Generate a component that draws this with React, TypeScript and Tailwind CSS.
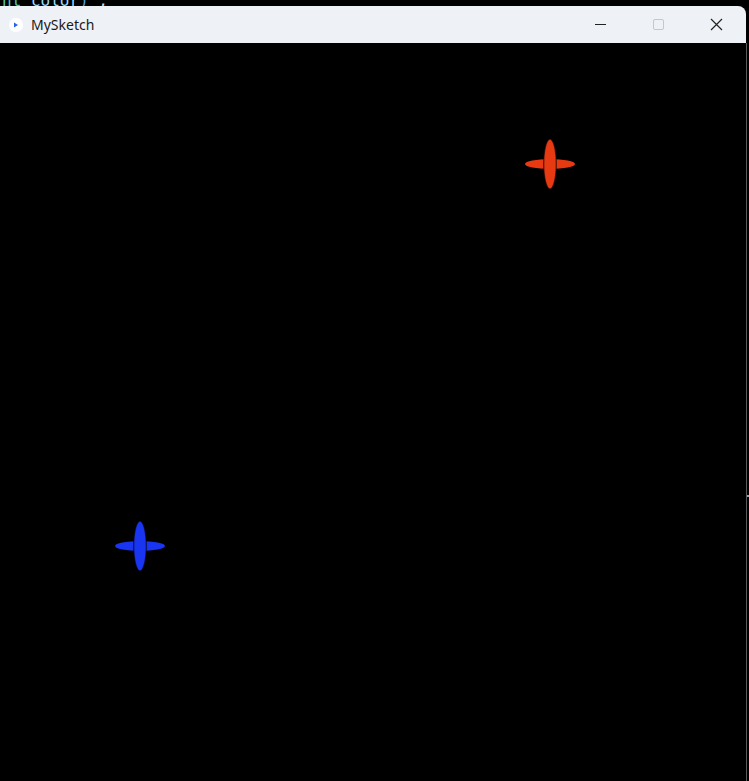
import React from 'react';

const Cross = ({ color, x, y }: { color: string; x: number; y: number }) => (
  <svg
    className="absolute"
    style={{ left: x - 26, top: y - 26 }}
    width={52}
    height={52}
    viewBox="0 0 52 52"
  >
    <ellipse cx={26} cy={26} rx={25} ry={5} fill={color} />
    <ellipse cx={26} cy={26} rx={6.3} ry={25} fill={color} stroke="#000" strokeOpacity={0.6} strokeWidth={1.3} />
  </svg>
);

export default function App() {
  return (
    <div className="flex h-[781px] w-[749px] flex-col overflow-hidden bg-black font-['Segoe_UI','Noto_Sans',sans-serif]">
      <div className="h-[6px] overflow-hidden">
        <div className="-mt-[9px] pl-[2px] font-['DejaVu_Sans_Mono',monospace] text-[16px] leading-[20px]">
          <span className="text-[#4ec9b0]">nt</span>{' '}
          <span className="text-[#9cdcfe]">color</span>
          <span className="text-[#569cd6]">)</span>{' '}
          <span className="text-[#d4d4d4]">;</span>
        </div>
      </div>
      <div className="flex flex-1">
        <div className="flex w-[746px] flex-col">
          <div className="flex h-[37px] items-center rounded-tr-[8px] bg-[#eef2f7]">
            <div className="ml-[9px] flex h-[14px] w-[14px] items-center justify-center rounded-full bg-white">
              <svg width="6" height="6" viewBox="0 0 6 6">
                <path d="M1 0.5 L5 3 L1 5.5 Z" fill="#2563eb" />
              </svg>
            </div>
            <span className="ml-[8px] text-[14px] text-[#1a1a1a]">MySketch</span>
            <div className="ml-auto flex h-full items-center">
              <div className="flex w-[58px] justify-center">
                <div className="h-px w-[11px] bg-[#222]" />
              </div>
              <div className="flex w-[58px] justify-center">
                <div className="h-[11px] w-[11px] rounded-[2px] border border-[#c4c8cc]" />
              </div>
              <div className="flex w-[58px] justify-center">
                <svg width="13" height="13" viewBox="0 0 13 13">
                  <path d="M1 1 L12 12 M12 1 L1 12" stroke="#222" strokeWidth="1.2" />
                </svg>
              </div>
              <div className="w-[1px]" />
            </div>
          </div>
          <div className="relative flex-1 bg-black">
            <Cross color="#e83a12" x={550} y={121} />
            <Cross color="#1a35f2" x={140} y={503} />
          </div>
        </div>
        <div className="flex w-[3px] flex-col">
          <div className="h-[37px]" />
          <div className="relative flex-1 border-l border-[#5a5a5a]">
            <div className="absolute left-0 top-[452px] h-[2px] w-[3px] bg-[#9aa6b0]" />
          </div>
        </div>
      </div>
    </div>
  );
}
